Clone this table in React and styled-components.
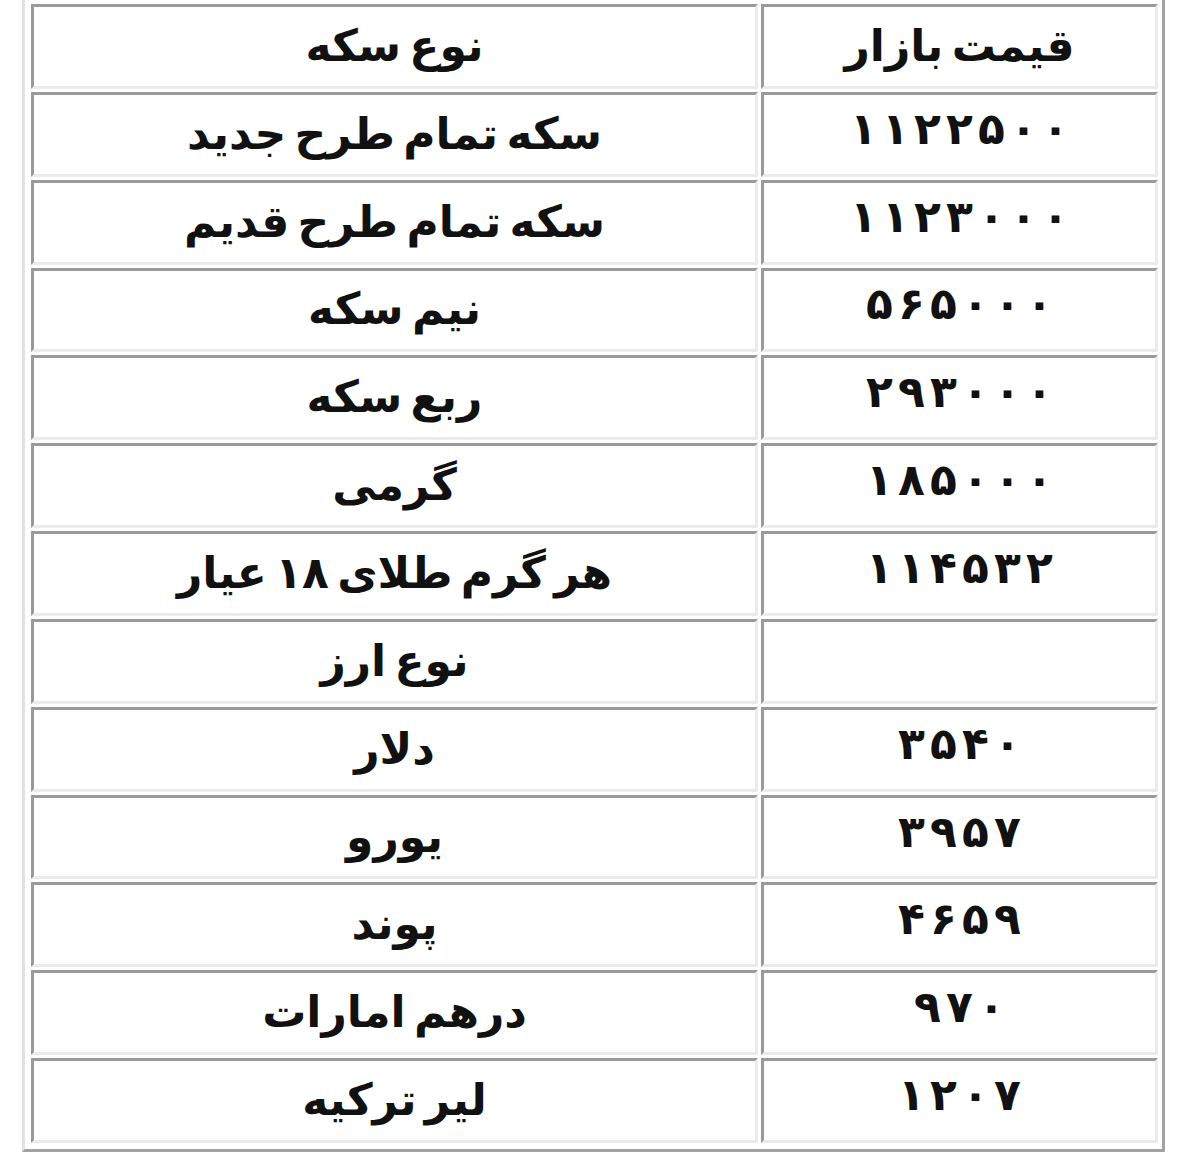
import React from 'react'
import styled, { createGlobalStyle } from 'styled-components'

const GlobalStyle = createGlobalStyle`
  html, body {
    margin: 0;
    padding: 0;
    background: #ffffff;
  }
`

const rows = [
  ['نوع سکه', 'قیمت بازار'],
  ['سکه تمام طرح جدید', '۱۱۲۲۵۰۰'],
  ['سکه تمام طرح قدیم', '۱۱۲۳۰۰۰'],
  ['نیم سکه', '۵۶۵۰۰۰'],
  ['ربع سکه', '۲۹۳۰۰۰'],
  ['گرمی', '۱۸۵۰۰۰'],
  ['هر گرم طلای ۱۸ عیار', '۱۱۴۵۳۲'],
  ['نوع ارز', ''],
  ['دلار', '۳۵۴۰'],
  ['یورو', '۳۹۵۷'],
  ['پوند', '۴۶۵۹'],
  ['درهم امارات', '۹۷۰'],
  ['لیر ترکیه', '۱۲۰۷'],
]

export default function App() {
  return (
    <>
      <GlobalStyle />
      <PriceTable>
        {rows.map(([name, price], i) => (
          <React.Fragment key={i}>
            <Cell dir="rtl">{name}</Cell>
            {i === 0 ? (
              <Cell dir="rtl">{price}</Cell>
            ) : (
              <Cell dir="ltr" $numeric>
                {[...price].map((d, j) => (
                  <Digit key={j}>{d}</Digit>
                ))}
              </Cell>
            )}
          </React.Fragment>
        ))}
      </PriceTable>
    </>
  )
}

const PriceTable = styled.div`
  display: grid;
  width: fit-content;
  grid-template-columns: 727px 397px;
  grid-auto-rows: 84.85px;
  column-gap: 3px;
  row-gap: 3px;
  margin-left: 22px;
  padding: 4px 4px 6px 6px;
  border-left: 3px solid #e2e2e2;
  border-right: 3px solid #a2a2a2;
  border-bottom: 3px solid #a2a2a2;
`

const Cell = styled.div`
  display: flex;
  align-items: center;
  justify-content: center;
  box-sizing: border-box;
  border: 3px solid;
  border-color: #9a9a9a #ebebeb #ebebeb #9a9a9a;
  font-family: "DejaVu Sans", sans-serif;
  font-weight: bold;
  font-size: 44px;
  color: #111111;
  white-space: nowrap;
  word-spacing: -7px;
  padding-bottom: ${p => (p.$numeric ? '12px' : '2px')};
`

const Digit = styled.span`
  display: inline-block;
  width: 32px;
  text-align: center;
`
